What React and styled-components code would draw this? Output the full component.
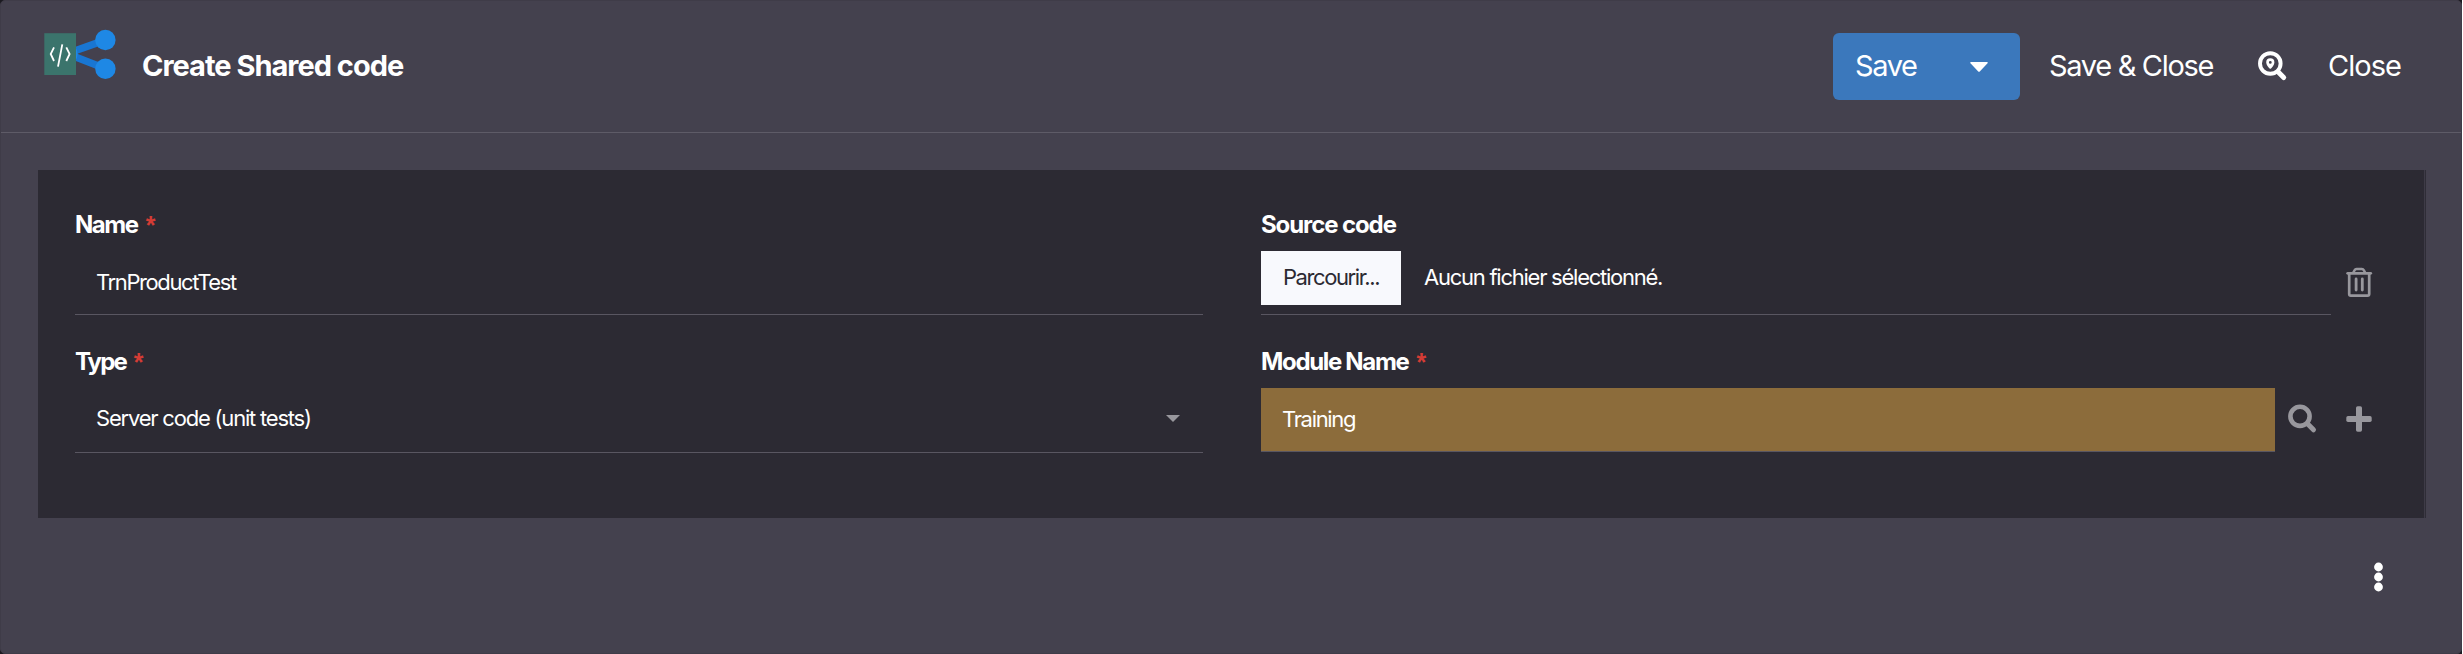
import React from "react";
import styled, { createGlobalStyle } from "styled-components";

const Global = createGlobalStyle`
  *, *::before, *::after { box-sizing: border-box; }
  body { margin: 0; background: #fff; }
`;

const Backdrop = styled.div`
  width: calc(100% - 1px);
  height: 654px;
  overflow: hidden;
  background: #1b1a20;
`;

const Window = styled.div`
  height: 654px;
  display: flex;
  flex-direction: column;
  background: #44414e;
  border: 1px solid #3f3c48;
  border-radius: 5px;
  color: #fff;
  font-family: Inter, "Liberation Sans", Arial, sans-serif;
`;

const Header = styled.header`
  height: 132px;
  display: flex;
  justify-content: space-between;
  border-bottom: 1px solid #5e5b67;
  padding: 0 41px 0 41px;
`;

const Brand = styled.div`
  display: flex;
`;

const Logo = styled.svg`
  display: block;
  width: 76px;
  height: 56px;
  margin-top: 26px;
`;

const Title = styled.h1`
  margin: 48px 0 0 24px;
  font-size: 29px;
  line-height: 33px;
  font-weight: 700;
  letter-spacing: -1px;
  white-space: nowrap;
`;

const Actions = styled.div`
  display: flex;
  align-items: center;
  height: 67px;
  margin-top: 32px;
`;

const SaveButton = styled.button`
  display: flex;
  align-items: center;
  justify-content: space-between;
  width: 187px;
  height: 67px;
  margin-right: 13px;
  padding: 0 32px 0 22px;
  border: 0;
  border-radius: 6px;
  background: #3b78bc;
  color: inherit;
  font: inherit;
  font-size: 29px;
  letter-spacing: -1.4px;
`;

const SaveText = styled.span`
  padding-bottom: 2px;
`;

const Caret = styled.svg`
  display: block;
  flex: none;
  width: ${(p) => p.$w}px;
  height: ${(p) => p.$h}px;
  fill: ${(p) => p.$color || "#fff"};
`;

const TextButton = styled.button`
  width: ${(p) => p.$w}px;
  padding: 0 0 2px 16px;
  border: 0;
  background: none;
  color: inherit;
  font: inherit;
  font-size: 29px;
  letter-spacing: ${(p) => p.$ls}px;
  text-align: left;
  white-space: nowrap;
`;

const LocateButton = styled.button`
  display: flex;
  width: 83px;
  padding: 0 0 0 28px;
  border: 0;
  background: none;
`;

const Glyph = styled.svg`
  display: block;
  flex: none;
  width: ${(p) => p.$size}px;
  height: ${(p) => p.$size}px;
`;

const Panel = styled.main`
  margin: 37px 35px 0 37px;
  height: 348px;
  padding: 38px 38px 0 37px;
  display: grid;
  grid-template-columns: 1128px 1fr;
  grid-template-rows: 137px 137px;
  column-gap: 58px;
  align-items: start;
  background: #2c2a33;
  border-right: 1px solid #2f2d37;
  box-shadow: inset -1px 0 0 #3e3b47;
`;

const Field = styled.div`
  display: flex;
  flex-direction: column;
`;

const Label = styled.label`
  display: flex;
  height: 43px;
  padding-top: 2px;
  font-size: 24px;
  line-height: 30px;
  font-weight: 700;
  letter-spacing: ${(p) => p.$ls}px;
  white-space: nowrap;
`;

const Required = styled.span`
  margin-left: 8px;
  color: #d43c35;
  font-family: "Liberation Sans", Arial, sans-serif;
  font-size: 25px;
`;

const Row = styled.div`
  display: flex;
  align-items: flex-start;
`;

const Control = styled.div`
  flex: 1;
  height: ${(p) => p.$h || 64}px;
  display: flex;
  align-items: center;
  justify-content: space-between;
  padding: 0 23px ${(p) => p.$pb || 2}px 21px;
  border-bottom: 1px solid #595661;
  background: ${(p) => p.$bg || "transparent"};
  font-size: 22px;
  letter-spacing: ${(p) => p.$ls}px;
  white-space: nowrap;
`;

const FileControl = styled(Control)`
  align-items: flex-start;
  justify-content: flex-start;
  padding: 0;
`;

const Browse = styled.button`
  width: 140px;
  height: 54px;
  padding: 0 0 2px;
  border: 0;
  background: #f8f9fd;
  color: #2c2a33;
  font: inherit;
  letter-spacing: -1.4px;
`;

const FileName = styled.span`
  line-height: 52px;
  margin-left: 23px;
`;

const IconButton = styled.button`
  width: 56px;
  height: 62px;
  display: flex;
  align-items: center;
  justify-content: center;
  padding: 0;
  border: 0;
  background: none;
  color: #98979d;
`;

const Footer = styled.footer`
  display: flex;
  justify-content: flex-end;
  padding: 43px 67px 0 0;
`;

const MenuButton = styled.button`
  display: flex;
  padding: 0;
  border: 0;
  background: none;
`;

const TrashIcon = () => (
  <Glyph $size={32} viewBox="0 0 32 32" fill="none" stroke="currentColor" strokeLinecap="round" strokeLinejoin="round">
    <path d="M4.700 7.300h23" strokeWidth="2.800" />
    <path d="M6.200 7.300V28q0 1.600 1.600 1.600h16.800q1.600 0 1.600-1.600V7.300" strokeWidth="2.700" />
    <path d="M10.300 6.500l1.200-2.200q.7-1.300 2-1.300h5.400q1.300 0 2 1.300l1.200 2.200" strokeWidth="2.500" />
    <path d="M13.100 13v11M19.300 13v11" strokeWidth="2.800" />
  </Glyph>
);

const SearchIcon = () => (
  <Glyph $size={32} viewBox="0 0 32 32" fill="none" stroke="currentColor">
    <circle cx="13" cy="13.300" r="9.600" strokeWidth="4.600" />
    <path d="M20.500 20.800l6 6" strokeWidth="5" strokeLinecap="round" />
  </Glyph>
);

const PlusIcon = () => (
  <Glyph $size={32} viewBox="0 0 32 32" fill="currentColor">
    <rect x="3.300" y="13" width="25.400" height="6" rx="1.700" />
    <rect x="13" y="3.300" width="6" height="25.400" rx="1.700" />
  </Glyph>
);

export default function App() {
  return (
    <>
      <Global />
      <Backdrop>
        <Window>
          <Header>
            <Brand>
              <Logo viewBox="42 27 76 56">
                <path d="M105.400 40 L67 53.600 L105.400 68.700" fill="none" stroke="#1976d2" strokeWidth="7.300" />
                <circle cx="67.500" cy="54" r="10.200" fill="#1e88e5" />
                <circle cx="105.400" cy="40" r="10.200" fill="#1e88e5" />
                <circle cx="105.400" cy="68.700" r="10.200" fill="#1e88e5" />
                <rect x="44.300" y="33.200" width="31.700" height="41.800" fill="#3b746c" />
                <path d="M54 47.300 L50.700 54 L54 61 M66.300 47.300 L69.600 54 L66.300 61 M62.300 44.300 L58 66.700" fill="none" stroke="#fff" strokeWidth="1.800" />
              </Logo>
              <Title>Create Shared code</Title>
            </Brand>
            <Actions>
              <SaveButton>
                <SaveText>Save</SaveText>
                <Caret $w={18} $h={10} viewBox="0 0 18 10">
                  <path d="M1 0h16q1.500 0 .5 1.200L10 9.300q-1 1-2 0L.5 1.200Q-.5 0 1 0z" />
                </Caret>
              </SaveButton>
              <TextButton $w={196} $ls={-1.32}>Save &amp; Close</TextButton>
              <LocateButton>
                <Glyph $size={32} viewBox="0 0 32 32">
                  <path d="M21 20.800l5.700 5.700" stroke="#fff" strokeWidth="5" strokeLinecap="round" />
                  <circle cx="13.300" cy="12.500" r="10.300" fill="none" stroke="#fff" strokeWidth="3.900" />
                  <path fillRule="evenodd" fill="#fff" d="M13.300 7.300a4.100 4.100 0 0 1 4.100 4.100c0 2.200-2.400 4.900-3.400 6.100q-.7.700-1.400 0c-1-1.200-3.400-3.900-3.400-6.100a4.100 4.100 0 0 1 4.100-4.100zM13.300 10a1.400 1.400 0 1 0 0 2.800 1.400 1.400 0 0 0 0-2.800z" />
                </Glyph>
              </LocateButton>
              <TextButton $w={108} $ls={-0.98}>Close</TextButton>
            </Actions>
          </Header>
          <Panel>
            <Field>
              <Label $ls={-1.45}>Name<Required>*</Required></Label>
              <Row><Control $ls={-1.4}>TrnProductTest</Control></Row>
            </Field>
            <Field>
              <Label $ls={-1.1}>Source code</Label>
              <Row>
                <FileControl $ls={-1.25}>
                  <Browse>Parcourir...</Browse>
                  <FileName>Aucun fichier sélectionné.</FileName>
                </FileControl>
                <IconButton><TrashIcon /></IconButton>
              </Row>
            </Field>
            <Field>
              <Label $ls={-1.9}>Type<Required>*</Required></Label>
              <Row>
                <Control $h={65} $pb={4} $ls={-1.21}>
                  Server code (unit tests)
                  <Caret $w={14} $h={7} $color="#98979d" viewBox="0 0 14 7"><path d="M0 0h14L7 7z" /></Caret>
                </Control>
              </Row>
            </Field>
            <Field>
              <Label $ls={-1.33}>Module Name<Required>*</Required></Label>
              <Row>
                <Control $bg="#8c6c3b" $ls={-1.32}>Training</Control>
                <IconButton><SearchIcon /></IconButton>
                <IconButton><PlusIcon /></IconButton>
              </Row>
            </Field>
          </Panel>
          <Footer>
            <MenuButton>
              <Glyph $size={32} viewBox="0 0 32 32" fill="#fff">
                <circle cx="16.500" cy="6" r="4.400" />
                <circle cx="16.500" cy="16" r="4.400" />
                <circle cx="16.500" cy="26" r="4.400" />
              </Glyph>
            </MenuButton>
          </Footer>
        </Window>
      </Backdrop>
    </>
  );
}
